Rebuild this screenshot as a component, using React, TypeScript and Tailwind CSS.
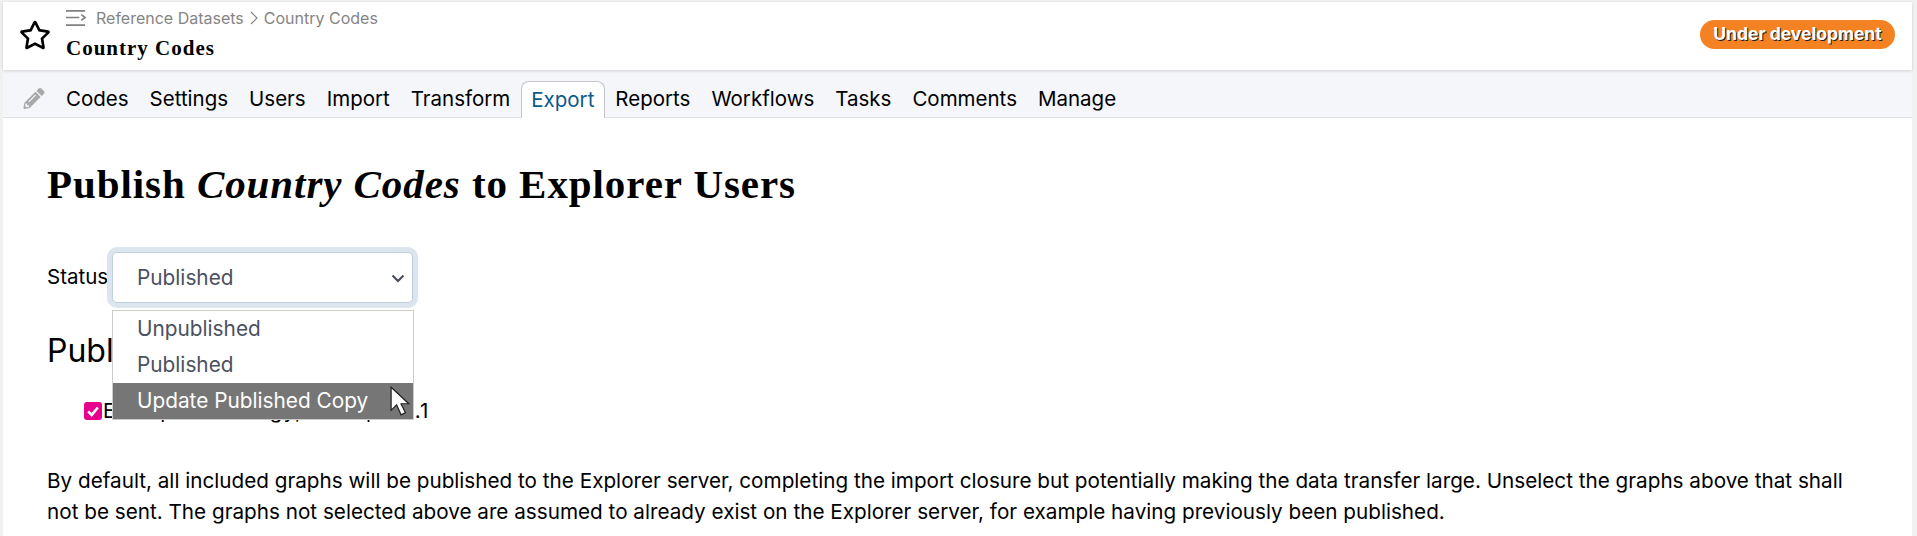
import { FaPencilAlt, FaRegStar } from "react-icons/fa";

const tabs = ["Codes", "Settings", "Users", "Import", "Transform", "Export", "Reports", "Workflows", "Tasks", "Comments", "Manage"];

export default function App() {
  return (
    <div className="h-[536px] w-[1917px] overflow-hidden bg-[#f1f1f1] pt-[2px] pl-[3px] pr-[5px] font-['Inter','Liberation_Sans',sans-serif] text-black">
      <div className="h-full bg-white">
        <header className="relative z-10 flex h-[68px] items-center justify-between bg-white pr-[17px] shadow-[0_1px_3px_rgba(0,0,0,0.15)]">
          <div className="flex items-center">
            <FaRegStar className="ml-[16px] -mt-[2px] h-[32px] w-[32px] text-black" />
            <div className="ml-[15px] flex flex-col -mt-[6px]">
              <div className="flex h-[24px] items-center text-[#858585] text-[16px]">
                <svg viewBox="0 0 22 18" className="mr-[9px] h-[18px] w-[21px]" fill="none" stroke="#808080" strokeWidth="1.7">
                  <path d="M0 1.5H20M0 8.5H14M0 16.5H20M16 5.5L20 8.5L16 11.5" />
                </svg>
                <span>Reference Datasets</span>
                <svg viewBox="0 0 8 14" className="mx-[6px] h-[14px] w-[8px]" fill="none" stroke="#808080" strokeWidth="1.2">
                  <path d="M1 1L7 7L1 13" />
                </svg>
                <span>Country Codes</span>
              </div>
              <div className="mt-[5px] font-['Liberation_Serif',serif] text-[21px] leading-[26px] font-bold tracking-[1px]">Country Codes</div>
            </div>
          </div>
          <span className="mb-[4px] flex h-[29px] w-[195px] items-center justify-center rounded-full bg-[#f58222] text-[17.5px] font-bold text-white [text-shadow:1px_1px_0_#222]">
            Under development
          </span>
        </header>
        <nav className="flex h-[48px] items-end border-b border-[#dfe2e8] bg-[#f4f6fa] pl-[20px]">
          <FaPencilAlt className="mb-[8px] mr-[10.5px] h-[21px] w-[22px] text-[#a9a9a9]" />
          <div className="flex items-end">
            {tabs.map((t) =>
              t === "Export" ? (
                <span key={t} className="-mb-px flex h-[37px] items-center rounded-t-[8px] border border-b-0 border-[#c4c6c9] bg-white px-[9.5px] text-[20.5px] text-[#0b5a8c]">
                  {t}
                </span>
              ) : (
                <span key={t} className="flex h-[36px] items-center px-[10.5px] text-[20.5px]">
                  {t}
                </span>
              ),
            )}
          </div>
        </nav>
        <main className="pl-[44px] pr-[50px]">
          <h1 className="mt-[42px] font-['Liberation_Serif',serif] text-[41px] leading-[48px] font-bold tracking-[0.93px]">
            Publish <span className="italic font-semibold">Country Codes</span> to Explorer Users
          </h1>
          <div className="relative mt-[44px] flex h-[51px] items-center">
            <span className="w-[65px] text-[20.5px]">Status</span>
            <div className="flex h-[51px] w-[301px] items-center justify-between rounded-[5px] border border-[#bfcfe0] bg-white pl-[24px] pr-[6px] text-[20.8px] text-[#4a5160] shadow-[0_0_0_5px_#dce5ee]">
              <span>Published</span>
              <svg viewBox="0 0 16 16" className="h-[16px] w-[16px]" fill="none" stroke="#444b57" strokeWidth="2">
                <path d="M2.5 5.5L8 11L13.5 5.5" />
              </svg>
            </div>
            <div className="absolute top-[58px] left-[65px] z-20 flex w-[302px] flex-col border border-[#cccccc] bg-white text-[20.8px] text-[#4a5160]">
              <div className="flex h-[36px] items-center pl-[24px]">Unpublished</div>
              <div className="flex h-[36px] items-center pl-[24px]">Published</div>
              <div className="flex h-[36px] items-center bg-[#767676] pl-[24px] text-white">Update Published Copy</div>
            </div>
            <svg viewBox="0 0 19 27" className="absolute top-[134px] left-[343px] z-30 h-[30px] w-[21px]">
              <path d="M1 1V22L6 17L10 26L14 24L10 16H17Z" fill="#fff" stroke="#222" strokeWidth="1.1" />
            </svg>
          </div>
          <h2 className="mt-[29px] text-[32px] leading-[38px]">Published graphs</h2>
          <div className="mt-[26px] ml-[37px] flex items-center">
            <span className="flex h-[18px] w-[18px] items-center justify-center rounded-[3px] bg-[#e6008c]">
              <svg viewBox="0 0 16 16" className="h-[14px] w-[14px]" fill="none" stroke="#fff" strokeWidth="3">
                <path d="M2.5 8.5L6.5 12.5L13.5 4" />
              </svg>
            </span>
            <span className="ml-[1px] text-[20.5px] tracking-[1.05px]">Example Ontology, Example 1.1</span>
          </div>
          <p className="mt-[38px] text-[20.7px] leading-[31px]">
            By default, all included graphs will be published to the Explorer server, completing the import closure but potentially making the data transfer large. Unselect the graphs above that shall not be sent. The graphs not selected above are assumed to already exist on the Explorer server, for example having previously been published.
          </p>
        </main>
      </div>
    </div>
  );
}
